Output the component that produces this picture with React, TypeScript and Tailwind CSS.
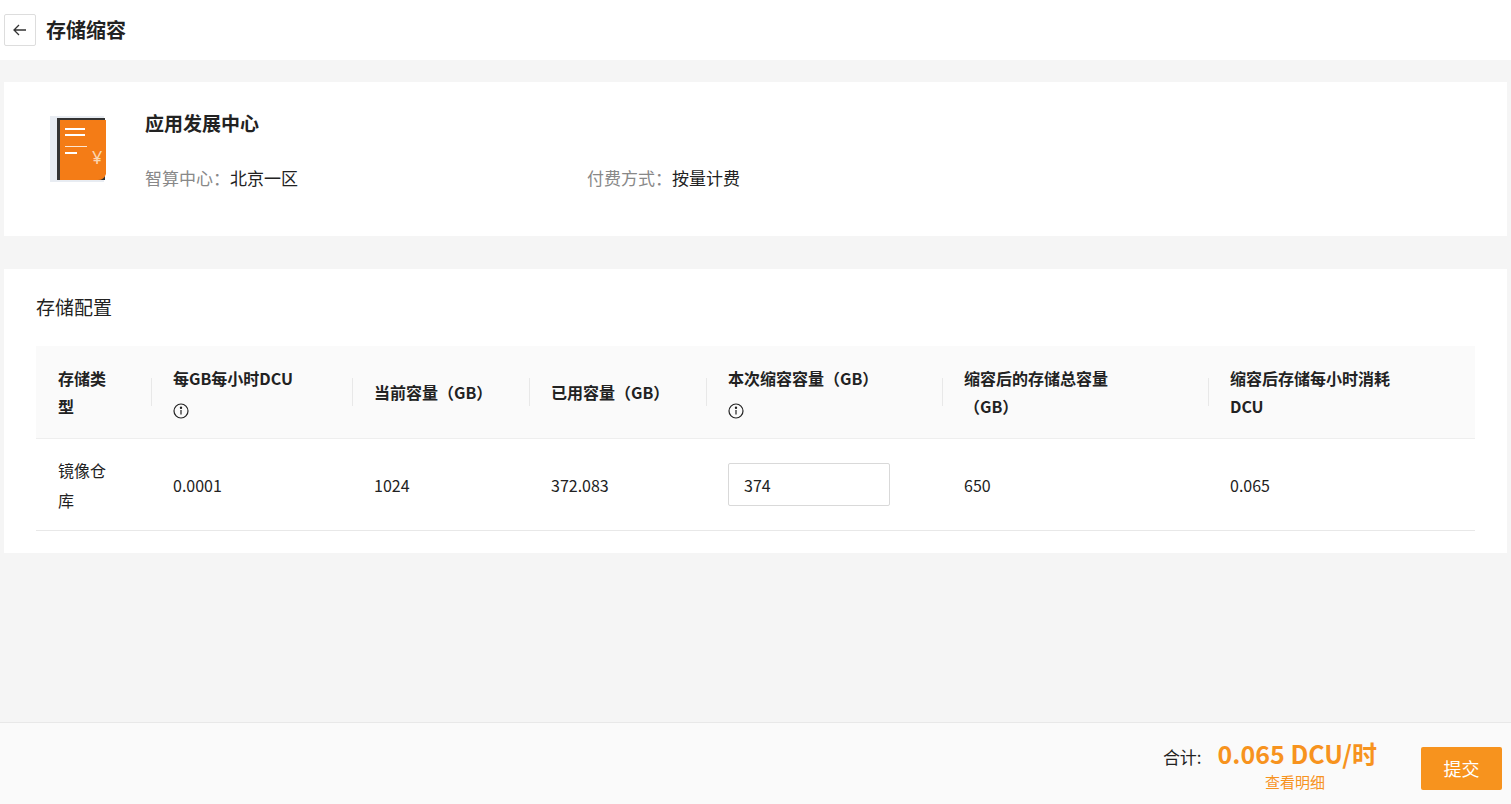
import React from "react";

const Info = () => (
  <svg width="16" height="16" viewBox="0 0 16 16" className="inline-block mt-1" fill="none" stroke="#222" strokeWidth="1.2">
    <circle cx="8" cy="8" r="7" />
    <line x1="8" y1="7" x2="8" y2="11.5" />
    <circle cx="8" cy="4.8" r="0.6" fill="#222" />
  </svg>
);

const cols = [
  { w: "w-[115px]", h: <>存储类<br />型</>, v: <>镜像仓<br />库</> },
  { w: "w-[201px]", h: <>每GB每小时DCU<br /><Info /></>, v: "0.0001" },
  { w: "w-[177px]", h: "当前容量（GB）", v: "1024" },
  { w: "w-[177px]", h: "已用容量（GB）", v: "372.083" },
  { w: "w-[236px]", h: <>本次缩容容量（GB）<br /><Info /></>, v: "input" },
  { w: "w-[266px]", h: <>缩容后的存储总容量<br />（GB）</>, v: "650" },
  { w: "flex-1", h: <>缩容后存储每小时消耗<br />DCU</>, v: "0.065" },
];

export default function App() {
  return (
    <div className="w-[1511px] h-[804px] flex flex-col bg-[#f5f5f5] text-[#222] overflow-hidden" style={{ fontFamily: '"Noto Sans CJK SC", "Noto Sans", sans-serif' }}>
      <div className="h-[60px] bg-white flex items-center px-[4px] gap-[10px] shrink-0">
        <div className="w-[32px] h-[32px] border border-[#ddd] rounded-[2px] flex items-center justify-center">
          <svg width="16" height="16" viewBox="0 0 16 16" fill="none" stroke="#333" strokeWidth="1.3"><path d="M14 8H2M7 3L2 8l5 5" /></svg>
        </div>
        <div className="text-[20px] font-bold">存储缩容</div>
      </div>
      <div className="flex-1 px-[4px] pt-[22px] flex flex-col gap-[33px]">
        <div className="bg-white h-[154px] flex pl-[44px] pt-[28px]">
          <svg width="60" height="72" viewBox="0 0 60 72" className="mt-[2px]">
            <rect x="2" y="4" width="54" height="66" fill="#e8ecf2" />
            <rect x="9" y="6" width="48" height="62" fill="#333" />
            <path d="M12 8h46v54q-2 6-8 6H12z" fill="#f47c16" />
            <rect x="17" y="16" width="20" height="2" fill="#fff" />
            <rect x="17" y="22" width="20" height="2" fill="#fff" />
            <rect x="17" y="34" width="22" height="1" fill="#fff" opacity=".8" />
            <rect x="17" y="40" width="12" height="2" fill="#fff" />
            <text x="44" y="52" fontSize="18" fill="#fbd6b0" fontFamily="Noto Sans">¥</text>
          </svg>
          <div className="ml-[37px]">
            <div className="text-[19px] font-bold leading-[26px]">应用发展中心</div>
            <div className="flex mt-[29px] text-[17px]">
              <div className="w-[442px]"><span className="text-[#888]">智算中心：</span>北京一区</div>
              <div><span className="text-[#888]">付费方式：</span>按量计费</div>
            </div>
          </div>
        </div>
        <div className="bg-white h-[284px] px-[32px] pt-[24px]">
          <div className="text-[19px] leading-[28px]">存储配置</div>
          <div className="mt-[25px] text-[16px]">
            <div className="flex bg-[#fafafa] h-[92px] font-bold">
              {cols.map((c, i) => (
                <div key={i} className={`${c.w} relative flex items-center px-[22px] leading-[28px]`}>
                  <div>{c.h}</div>
                  {i > 0 && <div className="absolute left-0 top-[32px] h-[28px] w-px bg-[#e8e8e8]" />}
                </div>
              ))}
            </div>
            <div className="flex h-[93px] border-b border-[#e8e8e8] border-t border-t-[#eee]">
              {cols.map((c, i) => (
                <div key={i} className={`${c.w} flex items-center px-[22px] leading-[30px]`}>
                  {c.v === "input" ? (
                    <div className="w-[162px] h-[43px] border border-[#d9d9d9] rounded-[2px] flex items-center px-[15px]">374</div>
                  ) : (
                    <div>{c.v}</div>
                  )}
                </div>
              ))}
            </div>
          </div>
        </div>
      </div>
      <div className="h-[82px] bg-[#fafafa] border-t border-[#e8e8e8] shrink-0 flex items-start justify-end pr-[9px]">
        <div className="flex flex-col items-end mt-[12px] mr-[44px]">
          <div className="flex items-baseline">
            <span className="text-[17px] mr-[16px]">合计:</span>
            <span className="text-[25px] font-bold text-[#f7931e]">0.065 DCU/时</span>
          </div>
          <div className="text-[15px] text-[#f7931e] mr-[52px] -mt-[2px]">查看明细</div>
        </div>
        <div className="mt-[24px] w-[81px] h-[43px] bg-[#f7931e] rounded-[2px] text-white text-[18px] flex items-center justify-center">提交</div>
      </div>
    </div>
  );
}
